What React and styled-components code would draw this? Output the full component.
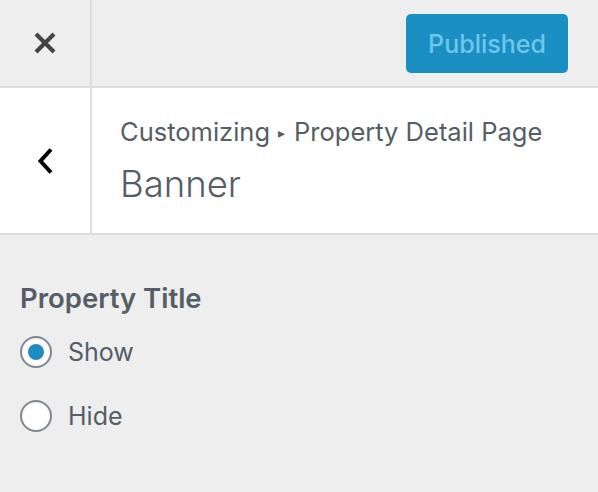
import React from 'react';
import styled, { createGlobalStyle } from 'styled-components';

const GlobalStyle = createGlobalStyle`
  html, body {
    margin: 0;
    padding: 0;
    background: #eeeeee;
  }
  body {
    font-family: Inter, "Noto Sans", sans-serif;
    -webkit-font-smoothing: antialiased;
  }
`

const Panel = styled.div`
  width: 598px;
  height: 492px;
  background: #eeeeee;
  overflow: hidden;
`

const TopBar = styled.div`
  display: flex;
  height: 86px;
  border-bottom: 2px solid #dddddd;
  background: #eeeeee;
`

const IconCell = styled.div`
  width: 90px;
  flex: none;
  display: flex;
  align-items: center;
  justify-content: center;
  border-right: 2px solid #dddddd;
  background: ${({ white }) => (white ? '#ffffff' : 'transparent')};
`

const Actions = styled.div`
  flex: 1;
  display: flex;
  justify-content: flex-end;
  align-items: flex-start;
  padding: 14px 30px 0 0;
`

const PublishButton = styled.button`
  width: 162px;
  height: 59px;
  border: none;
  border-radius: 5px;
  background: #1a8fc2;
  color: #70c5ea;
  font-family: inherit;
  font-size: 25px;
  font-weight: 500;
  padding: 0;
  cursor: default;
`

const Header = styled.div`
  display: flex;
  height: 145px;
  background: #ffffff;
  border-bottom: 2px solid #dddddd;
`

const TitleBlock = styled.div`
  display: flex;
  flex-direction: column;
  padding: 28px 0 0 28px;
`

const Crumb = styled.span`
  font-size: 25.5px;
  color: #555d66;
  line-height: 32px;
`

const Arrow = styled.span`
  font-size: 14px;
  margin: 0 9px 0 8px;
  position: relative;
  top: -3px;
`

const Title = styled.h1`
  margin: 10px 0 0 0;
  font-size: 36.5px;
  font-weight: 300;
  color: #555d66;
  line-height: 44px;
`

const Section = styled.div`
  padding: 46px 20px 0 20px;
`

const Label = styled.div`
  font-size: 27.5px;
  font-weight: 600;
  color: #555d66;
  line-height: 34px;
  margin-bottom: 21px;
`

const Option = styled.label`
  display: flex;
  align-items: center;
  gap: 16px;
  height: 32px;
  margin-bottom: 32px;
  font-size: 25px;
  color: #555d66;
`

const RadioDot = styled.span`
  width: 32px;
  height: 32px;
  flex: none;
  box-sizing: border-box;
  border-radius: 50%;
  border: 2px solid #7e8993;
  background: #ffffff;
  display: flex;
  align-items: center;
  justify-content: center;
  box-shadow: inset 0 1px 2px rgba(0, 0, 0, 0.1);

  &::after {
    content: '';
    display: ${({ checked }) => (checked ? 'block' : 'none')};
    width: 16px;
    height: 16px;
    border-radius: 50%;
    background: #1e8cbe;
  }
`

const CloseIcon = () => (
  <svg width="24" height="24" viewBox="0 0 24 24">
    <path d="M3 3 L21 21 M21 3 L3 21" stroke="#444" strokeWidth="4.2" strokeLinecap="butt" />
  </svg>
)

const BackIcon = () => (
  <svg width="18" height="28" viewBox="0 0 18 28">
    <path d="M15 2.5 L4.5 14 L15 25.5" stroke="#000" strokeWidth="4" fill="none" strokeLinejoin="miter" />
  </svg>
)

export default function App() {
  return (
    <Panel>
      <GlobalStyle />
      <TopBar>
        <IconCell>
          <CloseIcon />
        </IconCell>
        <Actions>
          <PublishButton disabled>Published</PublishButton>
        </Actions>
      </TopBar>
      <Header>
        <IconCell white>
          <BackIcon />
        </IconCell>
        <TitleBlock>
          <Crumb>
            Customizing<Arrow>▸</Arrow>Property Detail Page
          </Crumb>
          <Title>Banner</Title>
        </TitleBlock>
      </Header>
      <Section>
        <Label>Property Title</Label>
        <Option>
          <RadioDot checked />
          Show
        </Option>
        <Option>
          <RadioDot />
          Hide
        </Option>
      </Section>
    </Panel>
  );
}
